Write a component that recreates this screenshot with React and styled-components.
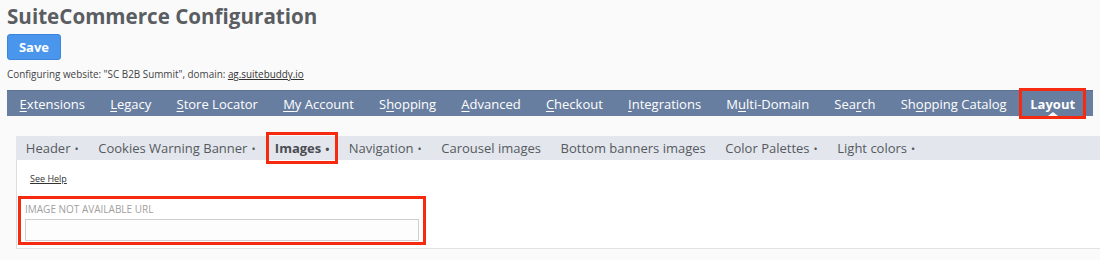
import React from 'react'
import styled, { createGlobalStyle } from 'styled-components'

const GlobalStyle = createGlobalStyle`
  body {
    margin: 0;
    background: #fafafa;
    font-family: "Open Sans", "Liberation Sans", sans-serif;
  }
`

const Page = styled.div`
  padding: 2px 0 0 7px;
  width: 1100px;
  box-sizing: border-box;
  overflow: hidden;
`

const Title = styled.h1`
  margin: 0;
  font-size: 20.6px;
  line-height: 28px;
  font-weight: 700;
  color: #5a5d62;
`

const SaveButton = styled.button`
  display: block;
  margin-top: 4px;
  width: 54px;
  height: 26px;
  padding: 0;
  border: 1px solid #3b86dc;
  border-radius: 3px;
  background: #4a96ec;
  color: #fff;
  font-family: inherit;
  font-size: 13px;
  font-weight: 700;
`

const Info = styled.p`
  margin: 7px 0 0;
  font-size: 9.9px;
  line-height: 14px;
  color: #444;
  a {
    color: #333;
    text-decoration: underline;
  }
`

const NavBar = styled.nav`
  display: flex;
  margin: 9px 7px 0 0;
  height: 26px;
  background: #687ea0;
  border-top: 1px solid #5b7093;
  box-sizing: border-box;
`

const NavItem = styled.span`
  position: relative;
  display: flex;
  align-items: center;
  padding: 0 ${p => p.$pad || 12.6}px;
  margin-left: ${p => (p.$active ? 3 : 0)}px;
  font-size: 13px;
  color: #fff;
  font-weight: ${p => (p.$active ? 700 : 400)};
  white-space: nowrap;
  outline: ${p => (p.$active ? '3px solid #f52a10' : 'none')};
  outline-offset: 0;
  u {
    text-decoration-thickness: 1px;
    text-underline-offset: 2px;
  }
  &::after {
    content: '';
    display: ${p => (p.$active ? 'block' : 'none')};
    position: absolute;
    left: 50%;
    bottom: 0;
    margin-left: -5px;
    border: 5px solid transparent;
    border-bottom: 4px solid #fafafa;
    border-top: 0;
  }
`

const Section = styled.div`
  margin: 20px 0 0 9px;
`

const SubTabs = styled.div`
  display: flex;
  height: 24px;
  background: #e3e6ec;
`

const SubTab = styled.span`
  display: flex;
  align-items: center;
  padding: 0 ${p => (p.$active ? 5 : 9.8)}px;
  margin: 0 ${p => (p.$active ? 4.5 : 0)}px;
  font-size: 13px;
  color: ${p => (p.$active ? '#4a4d52' : '#555a60')};
  font-weight: ${p => (p.$active ? 700 : 400)};
  white-space: nowrap;
  outline: ${p => (p.$active ? '3px solid #f52a10' : 'none')};
  outline-offset: 1px;
`

const Dot = styled.span`
  margin-left: 4px;
  font-size: 11px;
`

const Panel = styled.div`
  background: #fff;
  border-left: 1px solid #dcdcdc;
  border-bottom: 1px solid #e2e2e2;
  padding: 13px 0 3px 1px;
  height: 89px;
  box-sizing: border-box;
`

const HelpLink = styled.a`
  display: block;
  margin-left: 12px;
  font-size: 9px;
  line-height: 12px;
  color: #333;
  text-decoration: underline;
`

const FieldBox = styled.div`
  margin-top: 11px;
  width: 408px;
  height: 49px;
  box-sizing: border-box;
  border: 3px solid #f52a10;
  padding: 3px 4px 0;
`

const Label = styled.div`
  font-size: 10px;
  line-height: 14px;
  color: #a0a0a0;
`

const Input = styled.div`
  margin-top: 3px;
  height: 22px;
  border: 1px solid #cfcfcf;
  background: #fdfdfd;
  box-sizing: border-box;
`

const navItems = [
  ['', 'E', 'xtensions'],
  ['', 'L', 'egacy'],
  ['', 'S', 'tore Locator'],
  ['', 'M', 'y Account'],
  ['S', 'h', 'opping'],
  ['', 'A', 'dvanced'],
  ['', 'C', 'heckout'],
  ['', 'I', 'ntegrations'],
  ['M', 'u', 'lti-Domain'],
  ['Sea', 'r', 'ch'],
  ['Sh', 'o', 'pping Catalog'],
]

const subTabs = [
  ['Header', true],
  ['Cookies Warning Banner', true],
  ['Images', true, true],
  ['Navigation', true],
  ['Carousel images', false],
  ['Bottom banners images', false],
  ['Color Palettes', true],
  ['Light colors', true],
]

export default function App() {
  return (
    <Page>
      <GlobalStyle />
      <Title>SuiteCommerce Configuration</Title>
      <SaveButton>Save</SaveButton>
      <Info>
        Configuring website: "SC B2B Summit", domain: <a>ag.suitebuddy.io</a>
      </Info>
      <NavBar>
        {navItems.map(([a, k, b]) => (
          <NavItem key={a + k + b}>
            {a}<u>{k}</u>{b}
          </NavItem>
        ))}
        <NavItem $active $pad={8}>Layout</NavItem>
      </NavBar>
      <Section>
        <SubTabs>
          {subTabs.map(([name, dot, active]) => (
            <SubTab key={name} $active={active}>
              {name}
              {dot && <Dot>•</Dot>}
            </SubTab>
          ))}
        </SubTabs>
        <Panel>
          <HelpLink>See Help</HelpLink>
          <FieldBox>
            <Label>IMAGE NOT AVAILABLE URL</Label>
            <Input />
          </FieldBox>
        </Panel>
      </Section>
    </Page>
  )
}
